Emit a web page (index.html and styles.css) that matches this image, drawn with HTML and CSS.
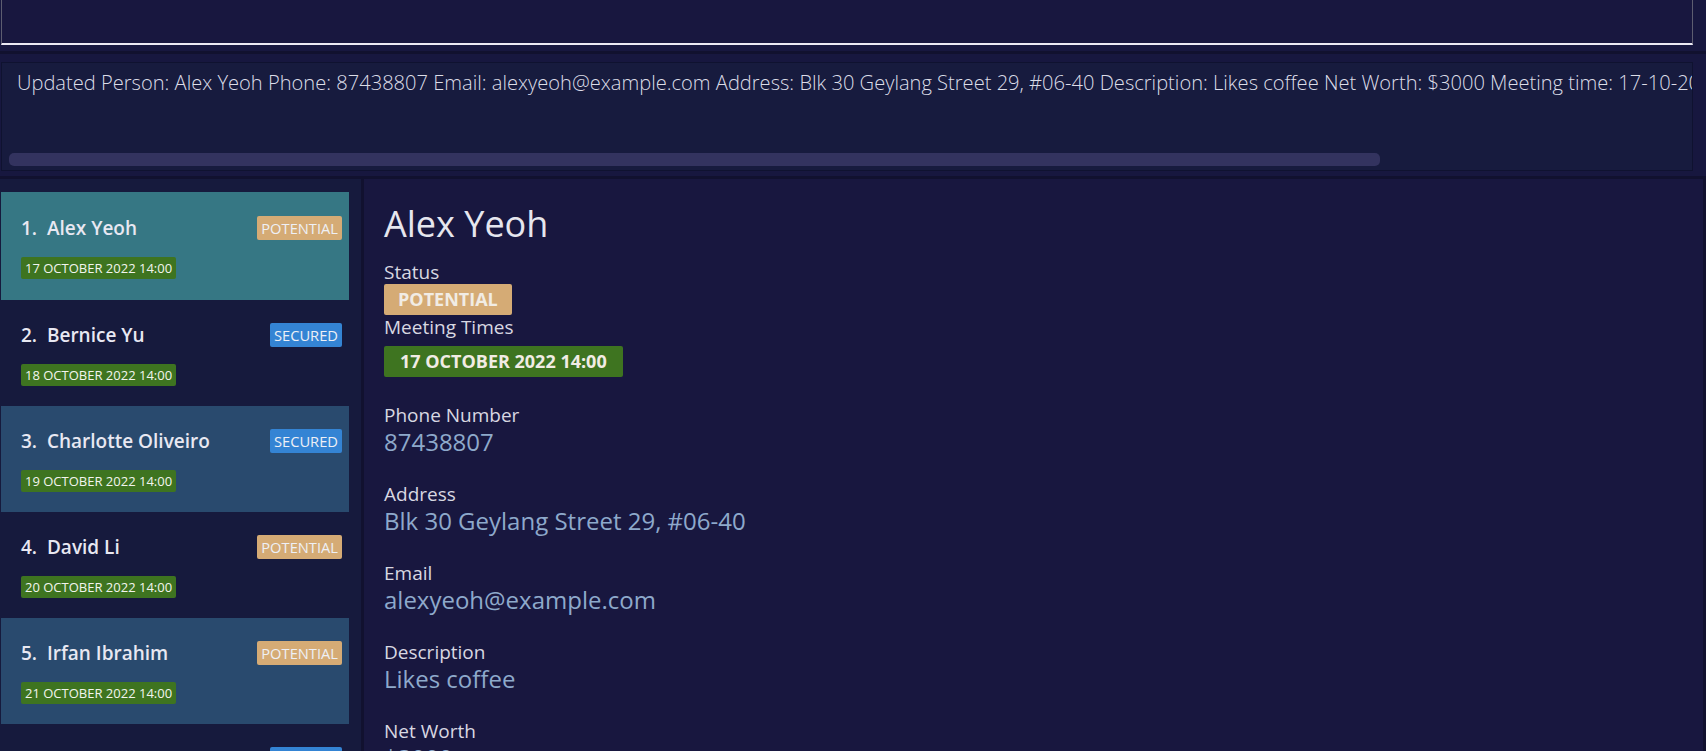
FILE: index.html
```html
<!DOCTYPE html>
<html>
<head>
<meta charset="utf-8">
<link rel="stylesheet" href="styles.css">
</head>
<body>
<div class="app">
  <div class="cmd-row">
    <div class="cmd"></div>
  </div>
  <div class="sep sep-top"></div>
  <div class="result-row">
    <div class="result">
      <div class="result-text">Updated Person: Alex Yeoh Phone: 87438807 Email: alexyeoh@example.com Address: Blk 30 Geylang Street 29, #06-40 Description: Likes coffee Net Worth: $3000 Meeting time: 17-10-2022-14:00 Status: POTENTIAL</div>
      <div class="hscroll"><div class="thumb"></div></div>
    </div>
  </div>
  <div class="sep"></div>
  <div class="main">
    <div class="list">
      <div class="card selected">
        <div class="card-top"><span class="name">1.&nbsp;&nbsp;Alex Yeoh</span><span class="tag potential">POTENTIAL</span></div>
        <div class="card-bottom"><span class="date">17 OCTOBER 2022 14:00</span></div>
      </div>
      <div class="card even">
        <div class="card-top"><span class="name">2.&nbsp;&nbsp;Bernice Yu</span><span class="tag secured">SECURED</span></div>
        <div class="card-bottom"><span class="date">18 OCTOBER 2022 14:00</span></div>
      </div>
      <div class="card odd">
        <div class="card-top"><span class="name">3.&nbsp;&nbsp;Charlotte Oliveiro</span><span class="tag secured">SECURED</span></div>
        <div class="card-bottom"><span class="date">19 OCTOBER 2022 14:00</span></div>
      </div>
      <div class="card even">
        <div class="card-top"><span class="name">4.&nbsp;&nbsp;David Li</span><span class="tag potential">POTENTIAL</span></div>
        <div class="card-bottom"><span class="date">20 OCTOBER 2022 14:00</span></div>
      </div>
      <div class="card odd">
        <div class="card-top"><span class="name">5.&nbsp;&nbsp;Irfan Ibrahim</span><span class="tag potential">POTENTIAL</span></div>
        <div class="card-bottom"><span class="date">21 OCTOBER 2022 14:00</span></div>
      </div>
      <div class="card even">
        <div class="card-top"><span class="name">6.&nbsp;&nbsp;Roy Balakrishnan</span><span class="tag secured">SECURED</span></div>
        <div class="card-bottom"><span class="date">22 OCTOBER 2022 14:00</span></div>
      </div>
    </div>
    <div class="vdiv"></div>
    <div class="detail">
      <div class="title">Alex Yeoh</div>
      <div class="label">Status</div>
      <div class="badge potential-badge">POTENTIAL</div>
      <div class="label">Meeting Times</div>
      <div class="badge date-badge">17 OCTOBER 2022 14:00</div>
      <div class="field first">
        <div class="label">Phone Number</div>
        <div class="value">87438807</div>
      </div>
      <div class="field">
        <div class="label">Address</div>
        <div class="value">Blk 30 Geylang Street 29, #06-40</div>
      </div>
      <div class="field">
        <div class="label">Email</div>
        <div class="value">alexyeoh@example.com</div>
      </div>
      <div class="field">
        <div class="label">Description</div>
        <div class="value">Likes coffee</div>
      </div>
      <div class="field">
        <div class="label">Net Worth</div>
        <div class="value">$3000</div>
      </div>
    </div>
    <div class="rdiv"></div>
  </div>
</div>
</body>
</html>
```
FILE: styles.css
```css
html, body {
  margin: 0;
  padding: 0;
  height: 100%;
  overflow: hidden;
}
body {
  background: #17173f;
  font-family: "Open Sans", "Noto Sans", "Liberation Sans", sans-serif;
  color: #e4e4ee;
}
.app {
  width: 1706px;
  height: 751px;
  display: flex;
  flex-direction: column;
}
.cmd-row {
  height: 45px;
  padding: 0 13px 0 1px;
  display: flex;
}
.cmd {
  flex: 1;
  background: #18173f;
  border-left: 1px solid #5d5d70;
  border-right: 1px solid #5d5d70;
  border-bottom: 2px solid #eceaf4;
}
.sep {
  height: 3px;
  background: #11112f;
}
.sep-top { margin-top: 6px; }
.result-row {
  padding: 8px 13px 5px 1px;
  display: flex;
}
.result {
  flex: 1;
  height: 109px;
  box-sizing: border-box;
  background: #171b3e;
  border: 1px solid #0f1230;
  display: flex;
  flex-direction: column;
  overflow: hidden;
}
.result-text {
  white-space: nowrap;
  overflow: hidden;
  box-sizing: border-box;
  padding: 6px 0 0 15px;
  font-size: 20.1px;
  font-weight: 300;
  color: #dcdde8;
  height: 90px;
}
.hscroll {
  padding: 0 0 0 7px;
}
.thumb {
  width: 1371px;
  height: 13px;
  border-radius: 5px;
  background: #33335f;
}
.main {
  flex: 1;
  display: flex;
  min-height: 0;
}
.list {
  width: 348px;
  padding: 13px 12px 0 1px;
  background: #161a3d;
  overflow: hidden;
}
.card {
  height: 106px;
  box-sizing: border-box;
  padding: 23px 7px 0 20px;
}
.card.selected { background: #367784; height: 108px; padding-top: 24px; }
.card.odd { background: #294a6e; }
.card.even { background: #161a3d; }
.card-top {
  display: flex;
  justify-content: space-between;
  align-items: center;
  height: 24px;
}
.name {
  font-size: 19px;
  font-weight: 600;
  color: #e8e8f2;
}
.tag {
  height: 24px;
  line-height: 24px;
  padding: 0 4px;
  border-radius: 2px;
  font-size: 14.7px;
  color: #eef0f6;
}
.tag.potential { background: #d5ab75; }
.tag.secured { background: #3484d4; }
.card-bottom {
  margin-top: 17px;
  display: flex;
}
.date {
  height: 22px;
  line-height: 22px;
  padding: 0 4px;
  border-radius: 2px;
  background: #3e7420;
  color: #f2f4ee;
  font-size: 13px;
}
.vdiv {
  width: 3px;
  background: #11112f;
}
.detail {
  flex: 1;
  background: #18173f;
  padding: 22px 0 0 20px;
  overflow: hidden;
}
.rdiv {
  width: 3px;
  background: #11112f;
}
.title {
  font-size: 36px;
  font-weight: 400;
  color: #e6e6ee;
  line-height: 46px;
  margin-bottom: 13px;
}
.label {
  font-size: 19px;
  color: #d8d8e2;
  line-height: 24px;
}
.badge {
  display: inline-block;
  height: 31px;
  line-height: 31px;
  border-radius: 2px;
  font-weight: 700;
  font-size: 18px;
  color: #f1ece4;
  padding: 0 14px;
  vertical-align: top;
}
.potential-badge { background: #d5ab75; }
.date-badge { background: #3e7420; padding: 0 16px; margin-top: 7px; }
.field { margin-top: 24.9px; }
.field.first { margin-top: 26px; }
.value {
  font-size: 24px;
  color: #8ea9cb;
  line-height: 30px;
}
```
